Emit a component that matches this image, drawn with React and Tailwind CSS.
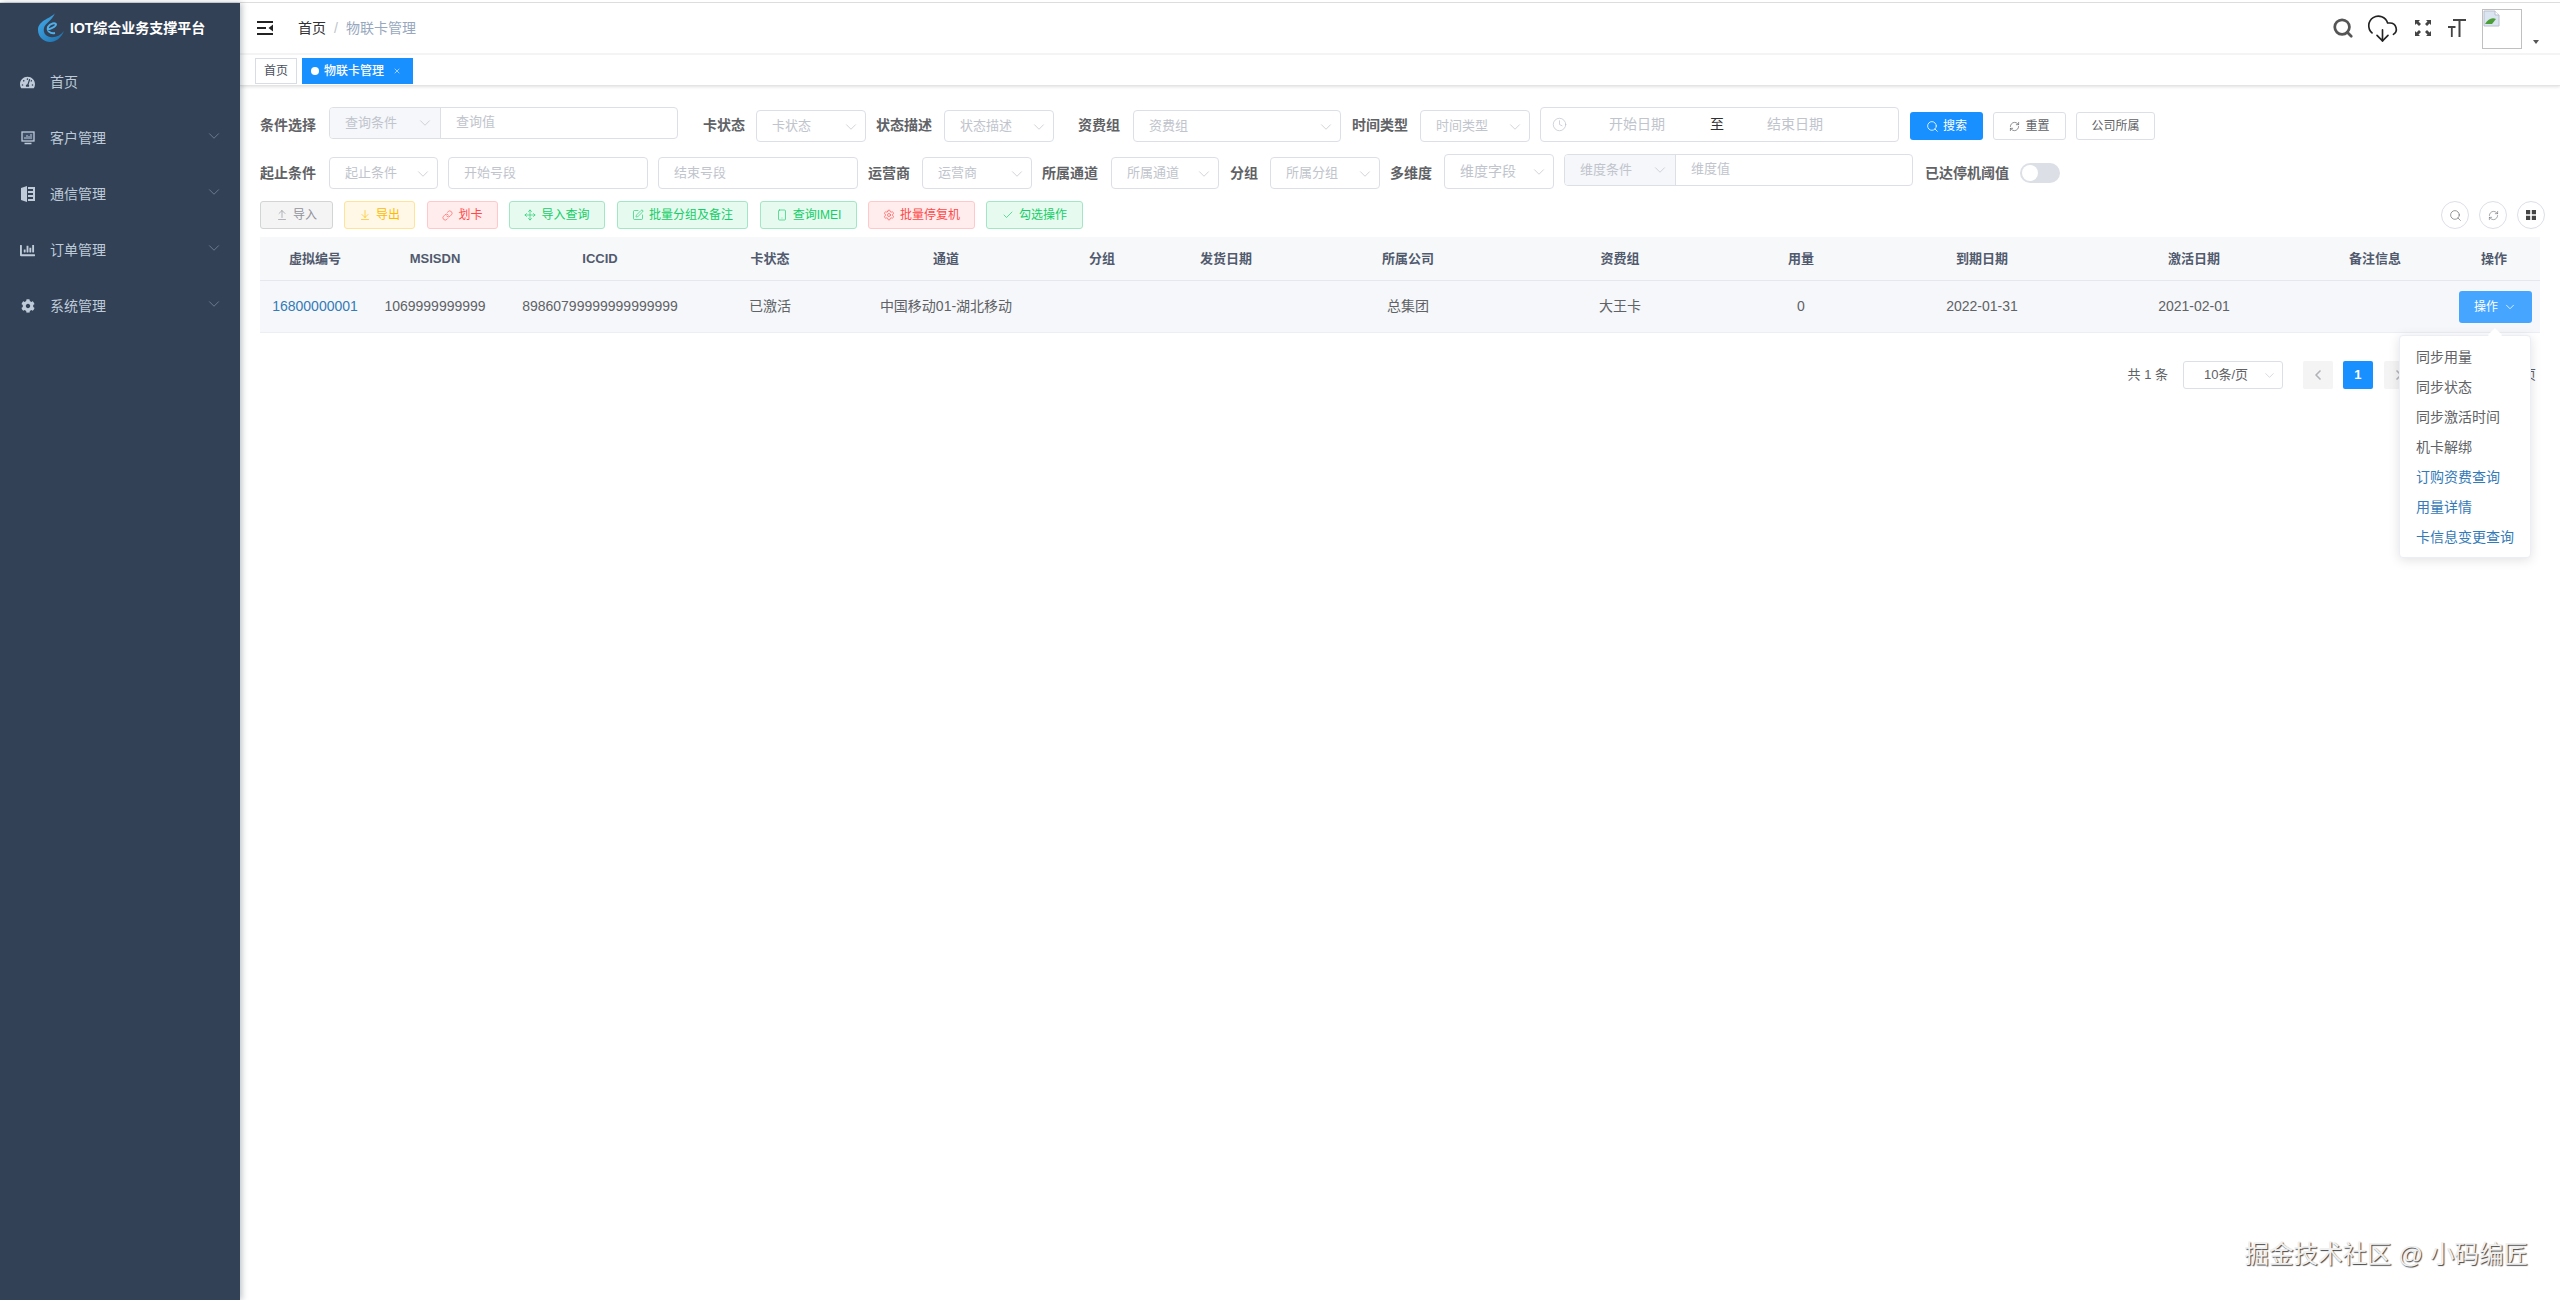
import React from "react";
import { Search, CloudDownload, ChevronDown, ChevronLeft, ChevronRight, Clock, RefreshCw, ArrowUpFromLine, ArrowDownToLine, Link, Move, SquarePen, Smartphone, Settings, Check, X } from "lucide-react";
import { FaTachometerAlt, FaChartBar, FaCog } from "react-icons/fa";

function Logo() {
  return (
    <svg width="28" height="30" viewBox="0 0 28 30" className="shrink-0">
      <defs>
        <linearGradient id="lg" x1="0" y1="0" x2="1" y2="1">
          <stop offset="0" stopColor="#45aef0" />
          <stop offset="1" stopColor="#1c6ea8" />
        </linearGradient>
      </defs>
      <path d="M18 0C15 5 1 7 1 17C1 25 8 29 13 29C19 29 24 25 27 18C23 23 18 25 13 24C8 23 6 19 7 15C8 10 15 8 18 0Z" fill="url(#lg)" />
      <path d="M10 17C13 16 19 14 19 11.500C19 9.500 13 10 11 14C10 18 13 21 18 20" fill="none" stroke="#4fb0ea" strokeWidth="2" />
    </svg>
  );
}

function BookIcon() {
  return (
    <svg width="14" height="16" viewBox="0 0 14 16" fill="#bfcbd9">
      <path d="M0 2L6 0V16L0 14Z" />
      <path d="M7 1H14V15H7V13H12V11H7V9H12V7H7V5H12V3H7Z" />
    </svg>
  );
}

function MonitorIcon() {
  return (
    <svg width="14" height="14" viewBox="0 0 14 14" fill="none" stroke="#bfcbd9">
      <rect x="1" y="1" width="12" height="9" fill="#3d4f67" strokeWidth="1.300" />
      <path d="M4 8V6M6 8V4M8 8V5M10 8V3" strokeWidth="1" />
      <path d="M3.500 12.500H10.500" strokeWidth="1.500" />
    </svg>
  );
}

const menus = [
  { name: "首页", icon: <FaTachometerAlt size={15} color="#bfcbd9" />, arrow: false },
  { name: "客户管理", icon: <MonitorIcon />, arrow: true },
  { name: "通信管理", icon: <BookIcon />, arrow: true },
  { name: "订单管理", icon: <FaChartBar size={15} color="#bfcbd9" />, arrow: true },
  { name: "系统管理", icon: <FaCog size={14} color="#bfcbd9" />, arrow: true },
];

function Sidebar() {
  return (
    <aside className="w-[240px] shrink-0 bg-[#324156] shadow-[2px_0_6px_rgba(0,21,41,0.25)] z-10">
      <div className="h-[50px] flex items-center pl-[37px] gap-[5px]">
        <Logo />
        <span className="text-[14px] font-bold text-white whitespace-nowrap">IOT综合业务支撑平台</span>
      </div>
      <nav className="pt-[1px]">
        {menus.map((m) => (
          <div key={m.name} className="h-[56px] flex items-center pl-[20px] pr-[17px] text-[14px] text-[#bfcbd9]">
            <span className="w-[15px] flex justify-center">{m.icon}</span>
            <span className="ml-[15px] flex-1">{m.name}</span>
            {m.arrow && <ChevronDown size={18} color="#7f8ea3" strokeWidth={1} className="-mt-[4px]" />}
          </div>
        ))}
      </nav>
    </aside>
  );
}

function HeaderBar() {
  return (
    <div className="h-[50px] flex items-center bg-white relative">
      <svg width="16" height="14" viewBox="0 0 16 14" className="ml-[17px]" fill="#222">
        <path d="M0 0H16V2H0ZM0 6H9V8H0ZM0 12H16V14H0ZM16 3.500V10.500L11.500 7Z" />
      </svg>
      <span className="ml-[25px] text-[14px] text-[#303133]">首页</span>
      <span className="mx-[8px] text-[14px] text-[#c0c4cc]">/</span>
      <span className="text-[14px] text-[#97a8be]">物联卡管理</span>
      <div className="ml-auto flex items-center text-[#333]">
        <Search size={22} strokeWidth={3} color="#555" />
        <CloudDownload size={33} strokeWidth={1.200} color="#222" className="ml-[12px]" />
        <svg width="18" height="18" viewBox="0 0 18 18" className="ml-[15px]" fill="#444">
          <path d="M1 1H6L4.500 2.500L7 5L5 7L2.500 4.500L1 6ZM17 1V6L15.500 4.500L13 7L11 5L13.500 2.500L12 1ZM1 17V12L2.500 13.500L5 11L7 13L4.500 15.500L6 17ZM17 17H12L13.500 15.500L11 13L13 11L15.500 13.500L17 12Z" />
        </svg>
        <svg width="18" height="18" viewBox="0 0 18 18" className="ml-[16px]" fill="#444">
          <path d="M5 0H18V2H12.500V18H10.500V2H5ZM0 7H7.500V9H4.700V18H2.900V9H0Z" />
        </svg>
        <div className="ml-[16px] -mb-[1px] w-[40px] h-[40px] border border-[#c0c0c0] bg-white">
          <svg width="17" height="17" viewBox="0 0 17 17">
            <path d="M1 1H12L16 5V16H1Z" fill="#dbe5f1" stroke="#b8c0cc" />
            <path d="M12 1V5H16" fill="#fff" stroke="#b8c0cc" />
            <path d="M2 14C5 9 9 7 13 9L9 14Z" fill="#4c9f38" />
          </svg>
        </div>
        <span className="ml-[11px] mr-[21px] mt-[28px] w-0 h-0 border-l-[3px] border-r-[3px] border-t-[4px] border-l-transparent border-r-transparent border-t-[#555]" />
      </div>
    </div>
  );
}

function TagsBar() {
  return (
    <div className="h-[33px] flex items-start pt-[4px] pl-[15px] gap-[5px] bg-white border-t-[2px] border-[#f4f4f4] border-b border-b-[#e4e4e4] shadow-[0_1px_3px_rgba(0,0,0,0.12)]">
      <div className="w-[42px] h-[26px] -mt-[1px] flex items-center justify-center border border-[#d8dce5] text-[12px] text-[#495060]">首页</div>
      <div className="w-[111px] h-[26px] -mt-[1px] flex items-center bg-[#1890ff] text-white text-[12px] pl-[9px]">
        <span className="w-[8px] h-[8px] rounded-full bg-white" />
        <span className="ml-[5px] font-medium">物联卡管理</span>
        <X size={8} className="ml-[9px]" strokeWidth={2} color="#dbeeff" />
      </div>
    </div>
  );
}

const phText = "text-[13px] text-[#c0c4cc] whitespace-nowrap";
const phBig = "text-[14px] text-[#c0c4cc] whitespace-nowrap";

function Label({ children, className }) {
  return <span className={"text-[14px] font-bold text-[#606266] whitespace-nowrap leading-[32px] " + className}>{children}</span>;
}

function Select({ text, className }) {
  return (
    <div className={"h-[32px] border border-[#dcdfe6] rounded-[4px] bg-white flex items-center pl-[15px] pr-[5px] shrink-0 " + className}>
      <span className={phText}>{text}</span>
      <ChevronDown size={18} color="#c0c4cc" strokeWidth={1} className="ml-auto mt-[2px]" />
    </div>
  );
}

function Group({ sel, ph, className, selClass }) {
  return (
    <div className={"h-[32px] border border-[#dcdfe6] rounded-[4px] bg-white flex shrink-0 overflow-hidden " + className}>
      <div className={"h-full bg-[#f5f7fa] border-r border-[#dcdfe6] flex items-center pl-[15px] pr-[6px] " + selClass}>
        <span className={phText}>{sel}</span>
        <ChevronDown size={18} color="#c0c4cc" strokeWidth={1} className="ml-auto" />
      </div>
      <span className={phText + " pl-[15px] leading-[28px]"}>{ph}</span>
    </div>
  );
}

function Input({ ph, className }) {
  return (
    <div className={"h-[32px] border border-[#dcdfe6] rounded-[4px] bg-white flex items-center pl-[15px] shrink-0 " + className}>
      <span className={phText}>{ph}</span>
    </div>
  );
}

function RowOne() {
  return (
    <div className="h-[47px] flex items-start pl-[20px]">
      <Label className="mt-[2px]">条件选择</Label>
      <Group sel="查询条件" ph="查询值" className="ml-[13px] w-[349px]" selClass="w-[111px]" />
      <Label className="ml-[25px] mt-[2px]">卡状态</Label>
      <Select text="卡状态" className="ml-[11px] mt-[3px] w-[110px]" />
      <Label className="ml-[10px] mt-[2px]">状态描述</Label>
      <Select text="状态描述" className="ml-[12px] mt-[3px] w-[110px]" />
      <Label className="ml-[24px] mt-[2px]">资费组</Label>
      <Select text="资费组" className="ml-[13px] mt-[3px] w-[208px]" />
      <Label className="ml-[11px] mt-[2px]">时间类型</Label>
      <Select text="时间类型" className="ml-[12px] mt-[3px] w-[110px]" />
      <div className="ml-[10px] w-[359px] h-[35px] border border-[#dcdfe6] rounded-[4px] flex items-center relative shrink-0">
        <Clock size={15} color="#c0c4cc" strokeWidth={1.200} className="ml-[11px]" />
        <span className={phBig + " ml-[42px]"}>开始日期</span>
        <span className="ml-[45px] text-[14px] text-[#303133]">至</span>
        <span className={phBig + " ml-[43px]"}>结束日期</span>
      </div>
      <button className="ml-[11px] mt-[5px] w-[73px] h-[28px] rounded-[3px] bg-[#1890ff] text-white text-[12px] flex items-center justify-center gap-[4px]">
        <Search size={13} strokeWidth={1.500} />搜索
      </button>
      <button className="ml-[10px] mt-[5px] w-[73px] h-[28px] rounded-[3px] border border-[#dcdfe6] text-[#606266] text-[12px] flex items-center justify-center gap-[5px]">
        <RefreshCw size={11} strokeWidth={1.500} />重置
      </button>
      <button className="ml-[10px] mt-[5px] w-[79px] h-[28px] rounded-[3px] border border-[#dcdfe6] text-[#606266] text-[12px] flex items-center justify-center">公司所属</button>
    </div>
  );
}

function RowTwo() {
  return (
    <div className="h-[47px] flex items-start pl-[20px]">
      <Label className="mt-[3px]">起止条件</Label>
      <Select text="起止条件" className="ml-[13px] mt-[3px] w-[109px]" />
      <Input ph="开始号段" className="ml-[10px] mt-[3px] w-[200px]" />
      <Input ph="结束号段" className="ml-[10px] mt-[3px] w-[200px]" />
      <Label className="ml-[10px] mt-[3px]">运营商</Label>
      <Select text="运营商" className="ml-[12px] mt-[3px] w-[110px]" />
      <Label className="ml-[10px] mt-[3px]">所属通道</Label>
      <Select text="所属通道" className="ml-[13px] mt-[3px] w-[108px]" />
      <Label className="ml-[11px] mt-[3px]">分组</Label>
      <Select text="所属分组" className="ml-[12px] mt-[3px] w-[110px]" />
      <Label className="ml-[10px] mt-[3px]">多维度</Label>
      <div className="ml-[12px] w-[110px] h-[35px] border border-[#dcdfe6] rounded-[4px] flex items-center pl-[15px] pr-[5px] shrink-0">
        <span className={phBig}>维度字段</span>
        <ChevronDown size={18} color="#c0c4cc" strokeWidth={1} className="ml-auto" />
      </div>
      <Group sel="维度条件" ph="维度值" className="ml-[10px] w-[349px]" selClass="w-[111px]" />
      <Label className="ml-[12px] mt-[3px]">已达停机阈值</Label>
      <div className="ml-[11px] mt-[9px] w-[40px] h-[20px] rounded-full bg-[#dcdfe6] relative">
        <span className="absolute left-[2px] top-[2px] w-[16px] h-[16px] rounded-full bg-white" />
      </div>
    </div>
  );
}

const toolBase = "h-[28px] rounded-[3px] border text-[12px] flex items-center justify-center gap-[5px] shrink-0";
const gray = "bg-[#f4f4f5] border-[#d3d4d6] text-[#909399]";
const yellow = "bg-[#fff8e6] border-[#ffe399] text-[#ffba00]";
const red = "bg-[#ffeded] border-[#ffc9c9] text-[#ff4949]";
const green = "bg-[#e7faf0] border-[#a3e6c5] text-[#13ce66]";

function RowThree() {
  const sz = { size: 12, strokeWidth: 1.300 };
  return (
    <div className="h-[36px] flex items-start pl-[20px] pr-[15px]">
      <button className={toolBase + " w-[73px] " + gray}><ArrowUpFromLine {...sz} />导入</button>
      <button className={toolBase + " ml-[11px] w-[71px] " + yellow}><ArrowDownToLine {...sz} />导出</button>
      <button className={toolBase + " ml-[12px] w-[71px] " + red}><Link size={11} strokeWidth={1.300} />划卡</button>
      <button className={toolBase + " ml-[11px] w-[96px] " + green}><Move {...sz} />导入查询</button>
      <button className={toolBase + " ml-[12px] w-[131px] " + green}><SquarePen {...sz} />批量分组及备注</button>
      <button className={toolBase + " ml-[12px] w-[97px] " + green}><Smartphone {...sz} />查询IMEI</button>
      <button className={toolBase + " ml-[11px] w-[107px] " + red}><Settings {...sz} />批量停复机</button>
      <button className={toolBase + " ml-[11px] w-[97px] " + green}><Check {...sz} />勾选操作</button>
      <div className="ml-auto flex gap-[10px]">
        <span className="w-[28px] h-[28px] rounded-full border border-[#dcdfe6] flex items-center justify-center"><Search size={13} color="#606266" strokeWidth={1.200} /></span>
        <span className="w-[28px] h-[28px] rounded-full border border-[#dcdfe6] flex items-center justify-center"><RefreshCw size={11} color="#606266" strokeWidth={1.200} /></span>
        <span className="w-[28px] h-[28px] rounded-full border border-[#dcdfe6] flex items-center justify-center">
          <svg width="10" height="10" viewBox="0 0 10 10" fill="#444"><path d="M0 0H4.200V4.200H0ZM5.800 0H10V4.200H5.800ZM0 5.800H4.200V10H0ZM5.800 5.800H10V10H5.800Z" /></svg>
        </span>
      </div>
    </div>
  );
}

const columns = ["虚拟编号", "MSISDN", "ICCID", "卡状态", "通道", "分组", "发货日期", "所属公司", "资费组", "用量", "到期日期", "激活日期", "备注信息", "操作"];
const cells = ["1069999999999", "89860799999999999999", "已激活", "中国移动01-湖北移动", "", "", "总集团", "大王卡", "0", "2022-01-31", "2021-02-01", ""];
const gridCols = "grid grid-cols-[110px_130px_200px_140px_212px_100px_148px_216px_208px_154px_208px_216px_146px_92px]";

function Dropdown() {
  const gray = ["同步用量", "同步状态", "同步激活时间", "机卡解绑"];
  const blue = ["订购资费查询", "用量详情", "卡信息变更查询"];
  return (
    <div className="absolute left-[2139px] top-[98px] w-[132px] h-[223px] bg-white rounded-[4px] border border-[#ebeef5] shadow-[0_2px_12px_rgba(0,0,0,0.12)] py-[6px] pl-[16px] text-[14px] z-20">
      <span className="absolute left-[90px] -top-[6px] w-[10px] h-[10px] rotate-45 bg-white" />
      {gray.map((t) => <div key={t} className="h-[30px] leading-[30px] text-[#606266] relative">{t}</div>)}
      {blue.map((t) => <div key={t} className="h-[30px] leading-[30px] text-[#337ab7] relative">{t}</div>)}
    </div>
  );
}

function Table() {
  return (
    <div className="ml-[20px] mr-[20px] relative">
      <div className={gridCols + " h-[44px] items-center bg-[#f7f8f9] border-b border-[#e4e7ed] text-center text-[13px] font-bold text-[#515a6e]"}>
        {columns.map((c) => <div key={c}>{c}</div>)}
      </div>
      <div className={gridCols + " h-[52px] items-center bg-[#f5f7fa] border-b border-[#ebeef5] text-center text-[14px] text-[#606266]"}>
        <div className="text-[#337ab7]">16800000001</div>
        {cells.map((c, i) => <div key={i} className="whitespace-nowrap">{c}</div>)}
        <div className="flex justify-end pr-[8px]">
          <button className="w-[73px] h-[32px] rounded-[3px] bg-[#46a6ff] text-white text-[12px] flex items-center justify-center gap-[5px]">操作<ChevronDown size={14} strokeWidth={1.300} /></button>
        </div>
      </div>
      <Dropdown />
    </div>
  );
}

function Pagination() {
  return (
    <div className="mt-[28px] h-[28px] flex items-center pr-[24px] justify-end text-[13px] text-[#606266]">
      <span>共 1 条</span>
      <div className="ml-[15px] w-[100px] h-[28px] border border-[#dcdfe6] rounded-[3px] flex items-center pl-[20px] pr-[5px]">
        <span className="whitespace-nowrap">10条/页</span>
        <ChevronDown size={15} color="#c0c4cc" strokeWidth={1} className="ml-auto" />
      </div>
      <span className="ml-[20px] w-[30px] h-[28px] rounded-[2px] bg-[#f4f4f5] flex items-center justify-center"><ChevronLeft size={16} color="#b0b3b8" strokeWidth={2.500} /></span>
      <span className="ml-[10px] w-[30px] h-[28px] rounded-[2px] bg-[#1890ff] text-white font-bold flex items-center justify-center">1</span>
      <span className="ml-[11px] w-[30px] h-[28px] rounded-[2px] bg-[#f4f4f5] flex items-center justify-center"><ChevronRight size={16} color="#b0b3b8" strokeWidth={2.500} /></span>
      <span className="ml-[109px]">页</span>
    </div>
  );
}

export default function App() {
  return (
    <div className="relative w-full h-[1300px] overflow-hidden bg-white font-['Liberation_Sans','Noto_Sans_CJK_SC',sans-serif]">
      <div className="h-[3px] bg-white border-b border-[#dddddd]" />
      <div className="flex h-[1297px]">
        <Sidebar />
        <main className="flex-1 min-w-0">
          <HeaderBar />
          <TagsBar />
          <div className="pt-[21px]">
            <RowOne />
            <RowTwo />
            <RowThree />
            <Table />
            <Pagination />
          </div>
        </main>
      </div>
      <div className="absolute right-[32px] bottom-[29px] text-[24.5px] leading-[32px] text-[#f0f0f0] [text-shadow:1px_1px_1px_#444] whitespace-nowrap z-30">掘金技术社区 @ 小码编匠</div>
    </div>
  );
}
